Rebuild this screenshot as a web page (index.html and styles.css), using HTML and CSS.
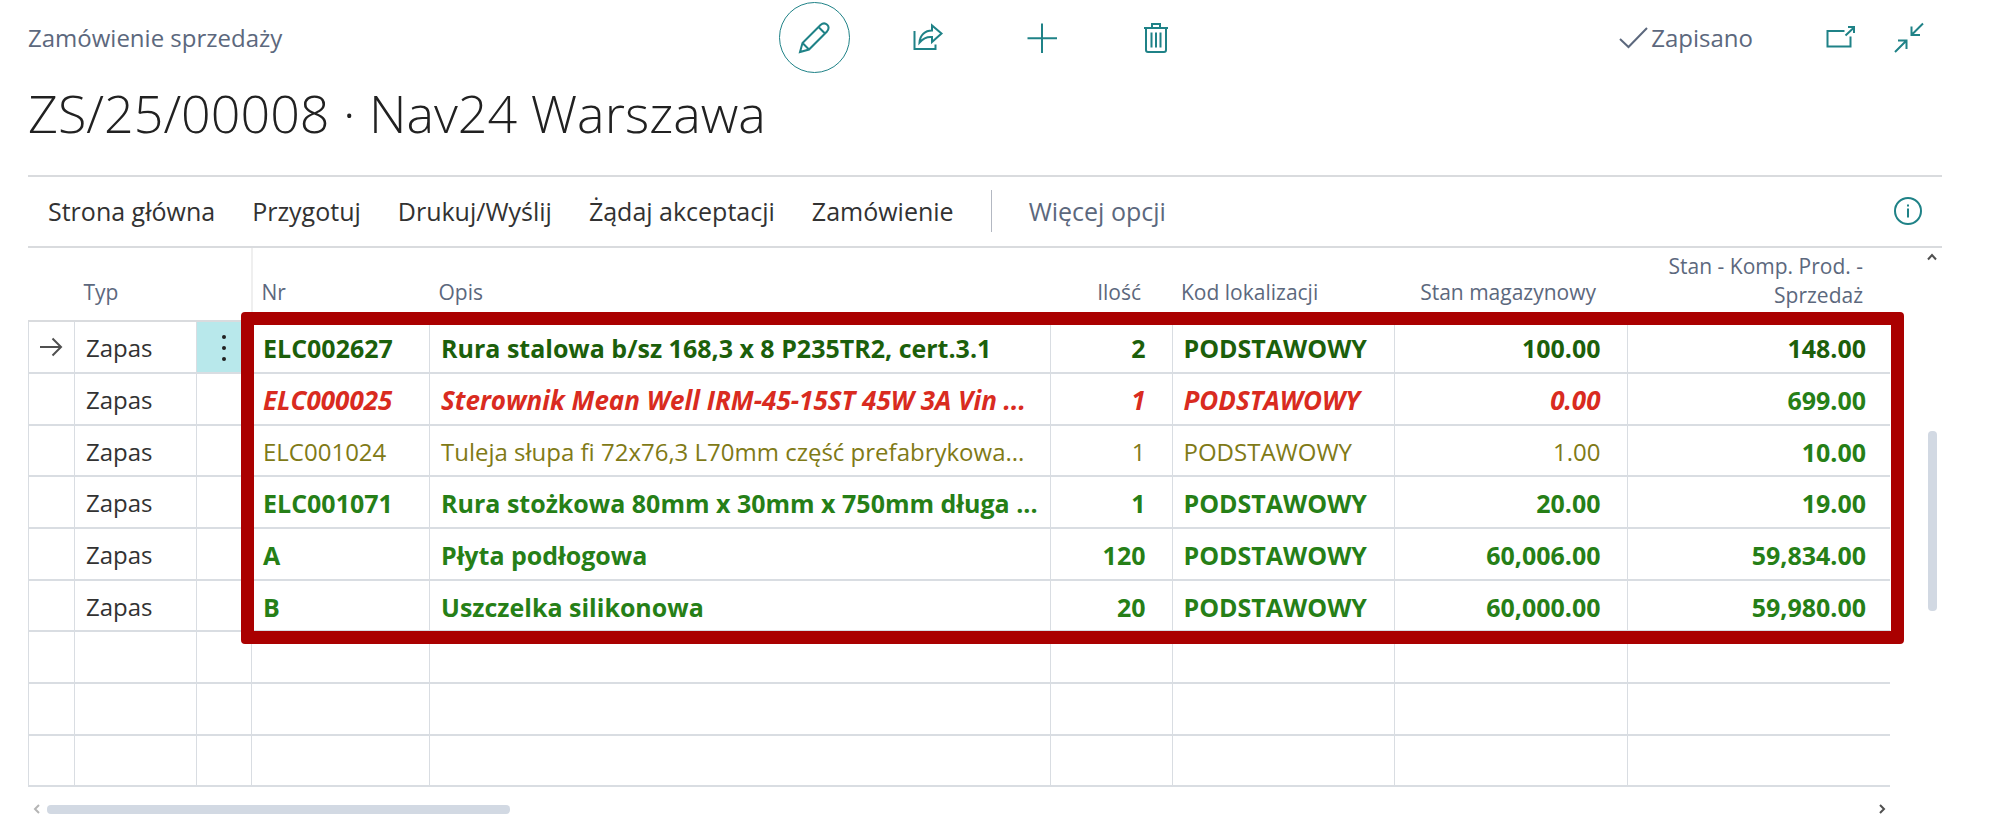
FILE: index.html
```html
<!DOCTYPE html>
<html lang="pl">
<head>
<meta charset="utf-8">
<title>ZS/25/00008 · Nav24 Warszawa</title>
<link rel="stylesheet" href="styles.css">
</head>
<body>
<main class="page">
  <header class="topbar">
    <span class="caption">Zamówienie sprzedaży</span>
    <div class="actions">
      <button class="action action-active" type="button" aria-label="Edytuj">
        <svg width="32" height="32" viewBox="0 0 32 32"><path d="M2 30 L4.500 21 L22.500 3 C25 .8 27.500 1.200 29.200 2.800 C30.900 4.500 31 7 29 9.500 L11 27.500 Z M4.500 21 L11 27.500 M20.500 5 L27 11.500"/></svg>
      </button>
      <button class="action" type="button" aria-label="Udostępnij">
        <svg width="32" height="32" viewBox="0 0 32 32"><path d="M2.500 9 V27 H23.500 V22.500 M7.500 20.500 C8 13 13 8.500 20 8.500 V3.500 L29.500 11.500 L20 20 V15 C15 14.500 11 16.500 7.500 20.500 Z"/></svg>
      </button>
      <button class="action" type="button" aria-label="Nowy">
        <svg width="32" height="32" viewBox="0 0 32 32"><path d="M16 1.500 V31 M1.500 16.300 H31"/></svg>
      </button>
      <button class="action" type="button" aria-label="Usuń">
        <svg width="32" height="32" viewBox="0 0 32 32"><path d="M4 6 H28 M12 6 V2 H20 V6 M6 6 V28 Q6 30 8 30 H24 Q26 30 26 28 V6 M11.500 10.500 V25.500 M16 10.500 V25.500 M20.500 10.500 V25.500"/></svg>
      </button>
    </div>
    <div class="status">
      <span class="saved"><svg width="30" height="24" viewBox="0 0 30 24"><path d="M1 13 L9.500 21 L28 2"/></svg>Zapisano</span>
      <button class="window-button" type="button" aria-label="Otwórz w nowym oknie">
        <svg width="32" height="32" viewBox="0 0 32 32"><path d="M19.500 9 H2.500 V24.500 H25.500 V14.500 M20.500 13.500 L29 5.500 M23 5 H29 V11"/></svg>
      </button>
      <button class="window-button" type="button" aria-label="Zwiń">
        <svg width="32" height="32" viewBox="0 0 32 32"><path d="M30 1.500 L18.500 13 M18.500 4.500 V13 H27 M2 30 L13.500 18.500 M5 18.500 H13.500 V27"/></svg>
      </button>
    </div>
  </header>

  <h1 class="title">ZS/25/00008 · Nav24 Warszawa</h1>

  <nav class="menu">
    <button type="button">Strona główna</button>
    <button type="button">Przygotuj</button>
    <button type="button">Drukuj/Wyślij</button>
    <button type="button">Żądaj akceptacji</button>
    <button type="button">Zamówienie</button>
    <span class="divider"></span>
    <button class="more" type="button">Więcej opcji</button>
    <button class="info" type="button" aria-label="Informacje">
      <svg width="30" height="30" viewBox="0 0 30 30"><circle cx="15" cy="15" r="13"/><path d="M15 12.500 V21.500 M15 8.500 V10.500"/></svg>
    </button>
  </nav>

  <section class="lines">
    <div class="grid">
      <table>
        <colgroup>
          <col class="c-mark"><col class="c-type"><col class="c-menu"><col class="c-no"><col class="c-desc"><col class="c-qty"><col class="c-loc"><col class="c-stock"><col class="c-comp">
        </colgroup>
        <thead>
          <tr><th></th><th>Typ</th><th></th><th class="frozen">Nr</th><th>Opis</th><th class="num">Ilość</th><th>Kod lokalizacji</th><th class="num">Stan magazynowy</th><th class="num">Stan - Komp. Prod. - Sprzedaż</th></tr>
        </thead>
        <tbody>
          <tr class="good current"><td class="mark"><svg width="24" height="20" viewBox="0 0 24 20"><path d="M1 10 H22 M13.500 1.500 L22 10 L13.500 18.500"/></svg></td><td class="type">Zapas</td><td class="rowmenu"><button type="button" aria-label="Więcej opcji wiersza"><svg width="6" height="28" viewBox="0 0 6 28"><circle cx="3" cy="3" r="2"/><circle cx="3" cy="14" r="2"/><circle cx="3" cy="25" r="2"/></svg></button></td><td>ELC002627</td><td>Rura stalowa b/sz 168,3 x 8 P235TR2, cert.3.1</td><td class="num">2</td><td>PODSTAWOWY</td><td class="num">100.00</td><td class="num">148.00</td></tr>
          <tr class="bad"><td></td><td class="type">Zapas</td><td></td><td>ELC000025</td><td>Sterownik Mean Well IRM-45-15ST 45W 3A Vin ...</td><td class="num">1</td><td>PODSTAWOWY</td><td class="num">0.00</td><td class="num ok">699.00</td></tr>
          <tr class="warn"><td></td><td class="type">Zapas</td><td></td><td>ELC001024</td><td>Tuleja słupa fi 72x76,3 L70mm część prefabrykowa...</td><td class="num">1</td><td>PODSTAWOWY</td><td class="num">1.00</td><td class="num ok">10.00</td></tr>
          <tr class="good"><td></td><td class="type">Zapas</td><td></td><td>ELC001071</td><td>Rura stożkowa 80mm x 30mm x 750mm długa ...</td><td class="num">1</td><td>PODSTAWOWY</td><td class="num">20.00</td><td class="num">19.00</td></tr>
          <tr class="good"><td></td><td class="type">Zapas</td><td></td><td>A</td><td>Płyta podłogowa</td><td class="num">120</td><td>PODSTAWOWY</td><td class="num">60,006.00</td><td class="num">59,834.00</td></tr>
          <tr class="good"><td></td><td class="type">Zapas</td><td></td><td>B</td><td>Uszczelka silikonowa</td><td class="num">20</td><td>PODSTAWOWY</td><td class="num">60,000.00</td><td class="num">59,980.00</td></tr>
          <tr><td></td><td></td><td></td><td></td><td></td><td></td><td></td><td></td><td></td></tr>
          <tr><td></td><td></td><td></td><td></td><td></td><td></td><td></td><td></td><td></td></tr>
          <tr><td></td><td></td><td></td><td></td><td></td><td></td><td></td><td></td><td></td></tr>
        </tbody>
      </table>
      <div class="highlight"></div>
      <div class="hscroll">
        <svg class="faded" width="8" height="10" viewBox="0 0 8 10"><path d="M6 1 L2 5 L6 9"/></svg>
        <span class="hthumb"></span>
        <svg class="end" width="8" height="10" viewBox="0 0 8 10"><path d="M2 1 L6 5 L2 9"/></svg>
      </div>
    </div>
    <div class="vscroll">
      <svg width="10" height="8" viewBox="0 0 10 8"><path d="M1 6.500 L5 2 L9 6.500"/></svg>
      <span class="vthumb"></span>
    </div>
  </section>
</main>
</body>
</html>
```
FILE: styles.css
```css
* { box-sizing: border-box; }
body {
  margin: 0;
  background: #fff;
  color: #323232;
  font: 24px/32px "Segoe UI", "Open Sans", "Noto Sans", sans-serif;
}
button {
  padding: 0;
  border: 0;
  background: none;
  color: inherit;
  font: inherit;
  white-space: nowrap;
}
svg { display: block; fill: none; stroke: currentColor; stroke-width: 2; }
.page { padding: 2px 58px 0 28px; }

.topbar { display: grid; grid-template-columns: 1fr auto 1fr; align-items: center; height: 71px; }
.caption, .status { color: #5c687d; }
.actions { display: flex; gap: 43px; color: #1f8287; }
.action { display: grid; place-items: center; width: 71px; height: 71px; border-radius: 50%; }
.action-active { border: 1px solid #1f8287; }
.status { display: flex; justify-content: flex-end; align-items: center; gap: 36px; padding-right: 17px; }
.saved { display: flex; align-items: center; gap: 2px; margin-right: 36px; }
.window-button { color: #1f8287; }

.title { margin: 0; height: 102px; padding-top: 2px; color: #212121; font-size: 52px; font-weight: 300; line-height: 76px; }

.menu {
  display: flex;
  align-items: center;
  gap: 37px;
  height: 73px;
  padding: 0 19px 2px 20px;
  border-top: 2px solid #d9dbde;
  border-bottom: 2px solid #d9dbde;
  font-size: 25px;
}
.divider { width: 1px; height: 42px; background: #b3b8c2; }
.more { color: #5c687d; }
.info { margin-left: auto; color: #1f8287; }

.lines { display: flex; }
.grid { flex: 1; min-width: 0; position: relative; }
table { width: 100%; table-layout: fixed; border-collapse: collapse; }
.c-mark { width: 46px; }
.c-type { width: 122px; }
.c-menu { width: 55px; }
.c-no { width: 178px; }
.c-qty { width: 122px; }
.c-loc { width: 222px; }
.c-stock { width: 233px; }
.c-comp { width: 263px; }
th {
  height: 73px;
  padding: 0 10px 13px 9px;
  border-bottom: 2px solid #d9dbde;
  color: #5c687d;
  font-size: 21px;
  font-weight: 400;
  line-height: 29px;
  text-align: left;
  vertical-align: bottom;
}
th:last-child { padding-bottom: 10px; }
th.num { padding-right: 31px; }
th.num:last-child { padding-right: 27px; }
th.frozen { border-left: 2px solid #efefef; }
td {
  height: 52px;
  padding: 2px 10px 0 11px;
  border: 1px solid #d9dde2;
  border-width: 2px 0 2px 1px;
  white-space: nowrap;
  overflow: hidden;
}
tr:nth-child(3n) td { height: 51px; }
.num { text-align: right; }
td.num { padding-right: 26px; }
td.num:last-child { padding-right: 24px; }
.good, .bad, .ok { font-size: 25px; font-weight: 700; }
.good { color: #267f17; }
.current { color: #1c5f0b; }
.bad { color: #d92b20; font-size: 26px; font-style: italic; }
.warn { color: #7f7a17; }
.ok { color: #267f17; font-style: normal; }
.type { color: #323232; font-size: 24px; font-weight: 400; font-style: normal; }
td.mark { padding: 0 0 0 10px; color: #505050; }
td.rowmenu { padding: 2px 0 0 24px; background: #b8e8eb; }
.rowmenu button { display: block; }
.rowmenu svg { fill: #212121; stroke: none; }
.highlight {
  position: absolute;
  top: 64px;
  right: -14px;
  left: 213px;
  height: 332px;
  border: 13px solid #aa0000;
  border-radius: 4px;
}
.hscroll { display: flex; align-items: center; gap: 6px; padding: 17px 4px 0 5px; color: #505050; }
.hthumb { width: 25%; height: 9px; border-radius: 4px; background: #d2d9e3; }
.faded { color: #b5b5b5; }
.end { margin-left: auto; }
.vscroll { display: flex; flex-direction: column; align-items: center; width: 52px; padding: 5px 0 0 32px; color: #505050; }
.vthumb { width: 9px; height: 180px; margin-top: 170px; border-radius: 4px; background: #d2d9e3; }
```
